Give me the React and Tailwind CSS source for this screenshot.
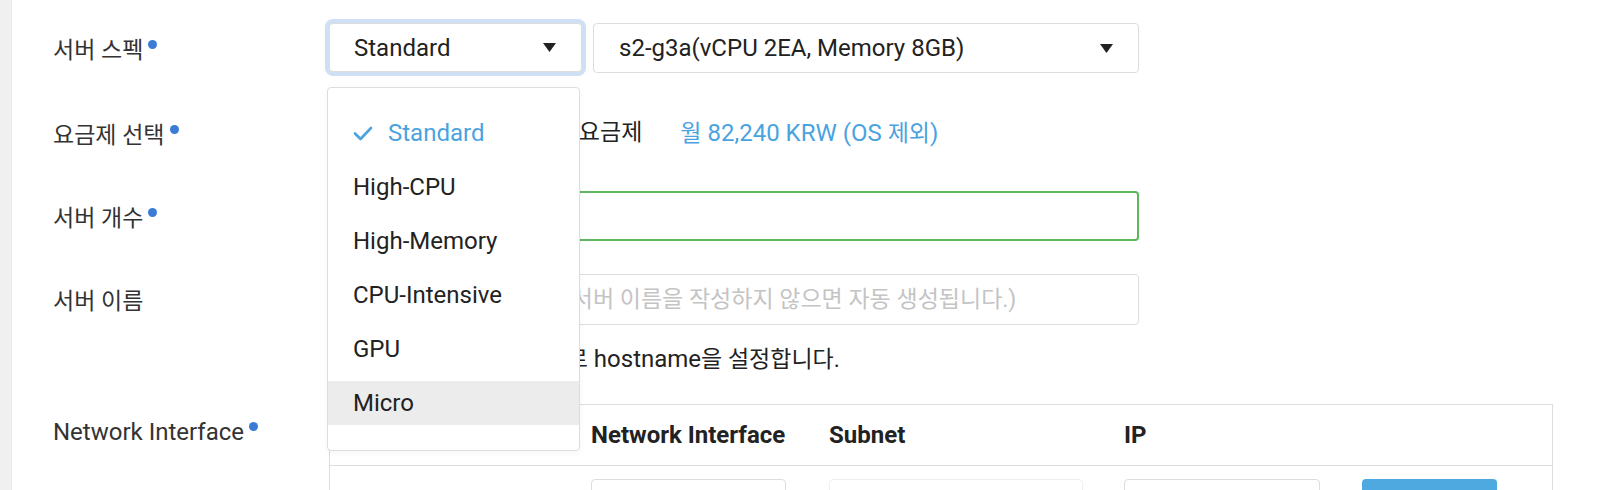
import React from 'react';

// hangul runs are set a little smaller than the latin text, as in the reference
const Ko = ({ children }) => <span className="text-[23px]">{children}</span>;

const Caret = () => (
  <svg width="13" height="9" viewBox="0 0 13 9" className="shrink-0">
    <polygon points="0,0 13,0 6.5,9" fill="#222" />
  </svg>
);

const Check = () => (
  <svg width="20" height="15" viewBox="0 0 20 15" className="shrink-0">
    <polyline points="2,7.5 7.5,13 18,2" fill="none" stroke="#4aa3df" strokeWidth="2.6" strokeLinecap="round" strokeLinejoin="round" />
  </svg>
);

function Label({ children, required }) {
  return (
    <div className="w-[276px] shrink-0 flex items-center pt-[4px] text-[#333]">
      <span>{children}</span>
      {required && <span className="relative -top-[6px] ml-[5px] w-[9px] h-[9px] rounded-full bg-[#3a7bd5]" />}
    </div>
  );
}

function Radio({ checked }) {
  return (
    <span className="w-[18px] h-[18px] rounded-full border border-[#bbb] flex items-center justify-center mr-[8px]">
      {checked && <span className="w-[10px] h-[10px] rounded-full bg-[#4aa3df]" />}
    </span>
  );
}

const specs = ['Standard', 'High-CPU', 'High-Memory', 'CPU-Intensive', 'GPU', 'Micro'];

function SpecMenu() {
  return (
    <div className="absolute left-[-2px] top-[64px] z-10 w-[253px] bg-white border border-[#ddd] rounded-[4px] pt-[23px] pb-[25px] flex flex-col gap-[10px] shadow-[0_2px_6px_rgba(0,0,0,0.04)]">
      {specs.map((s, i) => (
        <div
          key={s}
          className={`h-[44px] flex items-center pl-[25px] ${i === 0 ? 'text-[#4aa3df]' : 'text-[#222]'} ${s === 'Micro' ? 'bg-[#ececec]' : ''}`}
        >
          {i === 0 && (
            <span className="mr-[15px] flex">
              <Check />
            </span>
          )}
          {s}
        </div>
      ))}
    </div>
  );
}

export default function App() {
  return (
    <div className="flex min-h-screen bg-white text-[24px] leading-[30px] text-[#222] font-[family-name:Roboto,'Noto_Sans_CJK_KR',sans-serif]">
      <div className="w-[12px] shrink-0 bg-[#f0f0f0] border-r border-[#e8e8e8]" />
      <div className="flex-1 pl-[41px] pt-[23px]">
        {/* 서버 스펙 */}
        <div className="flex items-center h-[50px]">
          <Label required><Ko>서버 스펙</Ko></Label>
          <div className="flex gap-[11px]">
            <div className="relative">
              <div className="w-[253px] h-[49px] border border-[#ddd] rounded-[4px] ring-4 ring-[#cfdff4] bg-white flex items-center justify-between pl-[24px] pr-[25px]">
                <span>Standard</span>
                <Caret />
              </div>
              <SpecMenu />
            </div>
            <div className="w-[546px] h-[50px] border border-[#ddd] rounded-[4px] bg-white flex items-center justify-between pl-[25px] pr-[25px]">
              <span>s2-g3a(vCPU 2EA, Memory 8GB)</span>
              <Caret />
            </div>
          </div>
        </div>

        {/* 요금제 선택 */}
        <div className="flex items-center h-[50px] mt-[35px]">
          <Label required><Ko>요금제 선택</Ko></Label>
          <div className="flex items-center">
            <label className="flex items-center w-[197px]">
              <Radio />
              <Ko>시간 요금제</Ko>
            </label>
            <label className="flex items-center">
              <Radio checked />
              <Ko>월 요금제</Ko>
            </label>
            <span className="ml-[38px] text-[#4aa3df]">
              <Ko>월</Ko> 82,240 KRW (OS <Ko>제외</Ko>)
            </span>
          </div>
        </div>

        {/* 서버 개수 */}
        <div className="flex items-center h-[50px] mt-[33px]">
          <Label required><Ko>서버 개수</Ko></Label>
          <input
            defaultValue="1"
            className="w-[810px] h-[50px] border-2 border-[#5cb85c] rounded-[4px] px-[15px] outline-none text-[#222]"
          />
        </div>

        {/* 서버 이름 */}
        <div className="flex items-center h-[51px] mt-[33px]">
          <Label><Ko>서버 이름</Ko></Label>
          <input
            placeholder="(영문, 숫자만 입력 가능. 서버 이름을 작성하지 않으면 자동 생성됩니다.)"
            className="w-[810px] h-[51px] border border-[#ddd] rounded-[4px] pl-[10px] pr-[14px] outline-none text-[23px] placeholder:text-[#c4c4c4]"
          />
        </div>
        <div className="pl-[285px] mt-[19px] h-[30px] text-[#222]">
          <Ko>입력하신 서버 이름 그대로</Ko> hostname<Ko>을 설정합니다.</Ko>
        </div>

        {/* Network Interface */}
        <div className="flex items-start mt-[30px]">
          <div className="pt-[9px]">
            <Label required>Network Interface</Label>
          </div>
          <div className="w-[1224px] border-l border-t border-r border-[#ddd]">
            <div className="grid grid-cols-[246px_238px_295px_238px_1fr] h-[61px] items-center border-b border-[#ddd] font-bold text-[#222]">
              <div />
              <div className="pl-[15px]">Network Interface</div>
              <div className="pl-[15px]">Subnet</div>
              <div className="pl-[15px]">IP</div>
              <div />
            </div>
            <div className="grid grid-cols-[246px_238px_295px_238px_1fr] pt-[13px] pb-[13px]">
              <div />
              <div className="pl-[15px]">
                <div className="w-[195px] h-[48px] border border-[#ddd] rounded-[4px] bg-white" />
              </div>
              <div className="pl-[15px]">
                <div className="w-[254px] h-[48px] border border-[#eee] rounded-[4px] bg-white" />
              </div>
              <div className="pl-[15px]">
                <div className="w-[196px] h-[48px] border border-[#ddd] rounded-[4px] bg-white" />
              </div>
              <div className="pl-[15px]">
                <div className="w-[135px] h-[48px] rounded-[4px] bg-[#4ea9e0]" />
              </div>
            </div>
          </div>
        </div>
      </div>
    </div>
  );
}
